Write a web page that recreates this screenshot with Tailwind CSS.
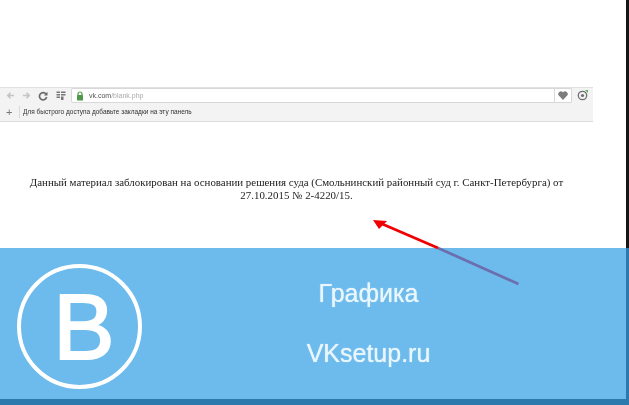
<!DOCTYPE html>
<html lang="ru">
<head>
<meta charset="utf-8">
<script src="https://cdn.jsdelivr.net/npm/@tailwindcss/browser@4"></script>
</head>
<body class="bg-[#2c7aad]">
<div class="relative flex h-[405px] w-[629px] flex-col overflow-hidden font-['Liberation_Sans',sans-serif]">
  <div class="flex h-[248px] w-full">
    <div class="flex w-[626px] flex-col bg-white pt-[87px]">
      <div class="w-[593px] blur-[0.35px]">
        <div class="flex h-[16px] items-center border-t border-[#e2e2e2] bg-[#f3f3f3]">
          <div class="flex w-[71px] items-center pl-[6px]">
            <svg class="w-[9px] h-[9px]" viewBox="0 0 10 10"><path d="M9 5H2M5 2 2 5l3 3" fill="none" stroke="#c4c4c4" stroke-width="1.8"/></svg>
            <svg class="ml-[7px] w-[9px] h-[9px]" viewBox="0 0 10 10"><path d="M1 5h7M5 2l3 3-3 3" fill="none" stroke="#c4c4c4" stroke-width="1.8"/></svg>
            <svg class="ml-[7px] w-[10px] h-[10px]" viewBox="0 0 10 10"><path d="M8 3.2A3.6 3.600 0 1 0 8.600 6" fill="none" stroke="#6a6a6a" stroke-width="1.700"/><path d="M9.500 .8v3.600H6z" fill="#6a6a6a"/></svg>
            <svg class="ml-[8px] w-[10px] h-[9px]" viewBox="0 0 9 9"><path d="M0 .5h3.500v1.500H0zM0 3h3.500v1.500H0zM0 5.500h3.500V7H0zM4.500 .5H9V2H4.500zM4.500 3H9v1.500H4.500zM4.500 5.500H7V9H4.500z" fill="#777"/></svg>
          </div>
          <div class="flex h-[15px] w-[501px] items-center rounded-l-[2px] border border-[#d8d8d8] bg-white">
            <svg class="ml-[4px] w-[8px] h-[10px]" viewBox="0 0 8 10"><path d="M2 4.500V3a2 2 0 0 1 4 0v1.500" fill="none" stroke="#4f9a4a" stroke-width="1.200"/><rect x="1" y="4" width="6" height="5.500" rx=".5" fill="#4f9a4a"/></svg>
            <span class="ml-[5px] text-[7px] leading-none text-[#555]">vk.com<span class="text-[#aaa]">/blank.php</span></span>
            <div class="ml-auto flex h-full w-[17px] items-center justify-center border-l border-[#d8d8d8]">
              <svg class="w-[10px] h-[9px]" viewBox="0 0 10 9"><path d="M5 9 .8 4.600A2.500 2.500 0 0 1 5 1.500 2.500 2.500 0 0 1 9.200 4.600z" fill="#7c7c7c"/></svg>
            </div>
          </div>
          <svg class="ml-[5px] w-[11px] h-[11px]" viewBox="0 0 11 11"><circle cx="5.500" cy="5.500" r="4.200" fill="none" stroke="#707070" stroke-width="1.300"/><circle cx="5.500" cy="5.500" r="1.600" fill="#707070"/><path d="M8 0h3v3z" fill="#5fae5f"/></svg>
        </div>
        <div class="flex h-[19px] items-center border-b border-[#dcdcdc] bg-[#f3f3f3]">
          <span class="w-[19px] pl-[6px] text-[11px] leading-none text-[#777]">+</span>
          <span class="h-[12px] w-px bg-[#dadada]"></span>
          <span class="ml-[3px] text-[6.500px] leading-none text-[#333]">Для быстрого доступа добавьте закладки на эту панель</span>
        </div>
      </div>
      <p class="mt-[54px] ml-[12px] w-[569px] text-center font-['Liberation_Serif',serif] text-[10.900px] leading-[12.500px] text-[#222] blur-[0.2px]">Данный материал заблокирован на основании решения суда (Смольнинский районный суд г. Санкт-Петербурга) от 27.10.2015 № 2-4220/15.</p>
    </div>
    <div class="w-[3px] bg-[#151515]"></div>
  </div>
  <div class="flex h-[151px] border-r-[3px] border-[#2c7aad] bg-[#6dbbec]">
    <div class="ml-[17px] mt-[16px] flex h-[125px] w-[125px] items-center justify-center rounded-full border-4 border-white blur-[0.3px]">
      <span class="pl-[9px] pt-[1px] text-[92px] leading-none text-white [-webkit-text-stroke:2px_white]">B</span>
    </div>
    <div class="ml-[154px] flex w-[145px] flex-col items-center pt-[31px] text-[#eaf6fd] blur-[0.3px] [text-shadow:0_0_1px_#eaf6fd]">
      <span class="text-[25px] leading-[28px]">Графика</span>
      <span class="mt-[32px] text-[25px] leading-[28px]">VKsetup.ru</span>
    </div>
  </div>
  <div class="h-[6px] w-full bg-[#2c7aad]"></div>
  <svg class="absolute left-0 top-0 h-[405px] w-[629px]" viewBox="0 0 629 405">
    <path d="M438 248 518.500 284" fill="none" stroke="#6b6fae" stroke-width="2.800"/>
    <path d="M438 248 380 223" fill="none" stroke="#f00000" stroke-width="2.800"/>
    <path d="M373 220 387 221 379 229z" fill="#f00000"/>
  </svg>
</div>
</body>
</html>
